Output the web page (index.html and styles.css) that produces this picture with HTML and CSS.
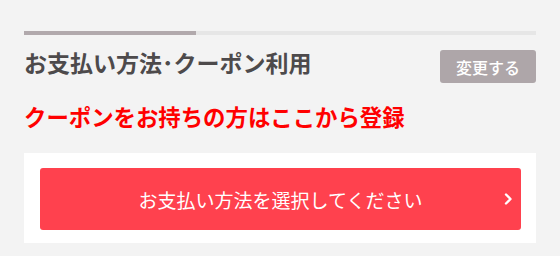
FILE: index.html
```html
<!DOCTYPE html>
<html lang="ja">
<head>
  <meta charset="UTF-8" />
  <meta name="viewport" content="width=device-width, initial-scale=1.0"/>
  <title>お支払い方法・クーポン利用</title>
  <link rel="stylesheet" href="styles.css">
</head>
<body>
  <div class="section">
    <div class="progress">
      <div class="progress-fill"></div>
    </div>

    <div class="section-head">
      <h2>お支払い方法･クーポン利用</h2>
      <button class="change-btn" type="button">変更する</button>
    </div>

    <a class="coupon-link" href="#">クーポンをお持ちの方はここから登録</a>

    <div class="panel">
      <button class="pay-btn" type="button">
        <span>お支払い方法を選択してください</span>
        <svg class="chevron" width="9" height="12" viewBox="0 0 9 12">
          <path d="M2 1.5 L6.5 6 L2 10.5" fill="none" stroke="#fff" stroke-width="2.4" stroke-linecap="round" stroke-linejoin="round"/>
        </svg>
      </button>
    </div>
  </div>
</body>
</html>
```

FILE: styles.css
```css
body {
  margin: 0;
  padding: 0;
  background: #f3f3f3;
  font-family: "Noto Sans CJK JP", "Noto Sans", sans-serif;
}

.section {
  padding: 31px 24px 0;
}

.progress {
  height: 4px;
  background: #e6e6e6;
}

.progress-fill {
  width: 172px;
  height: 100%;
  background: #b1a9ac;
}

.section-head {
  display: flex;
  justify-content: space-between;
  align-items: flex-start;
  margin-top: 15px;
}

h2 {
  margin: 0;
  font-size: 23px;
  line-height: 24px;
  font-weight: 700;
  color: #4d4a4b;
}

.change-btn {
  width: 96px;
  height: 33px;
  padding: 0;
  border: none;
  border-radius: 3px;
  background: #aea6a9;
  color: #fff;
  font-family: inherit;
  font-size: 16px;
  font-weight: 500;
  cursor: pointer;
}

.coupon-link {
  display: block;
  margin-top: 18px;
  font-size: 22.4px;
  line-height: 30px;
  font-weight: 700;
  color: #ff0000;
  text-decoration: none;
}

.panel {
  margin-top: 22px;
  background: #fff;
  padding: 15px 15px 13px 16px;
}

.pay-btn {
  position: relative;
  display: flex;
  justify-content: center;
  align-items: center;
  width: 100%;
  height: 62px;
  border: none;
  border-radius: 3px;
  background: #ff414e;
  color: #fff;
  font-family: inherit;
  font-size: 19px;
  cursor: pointer;
}

.chevron {
  position: absolute;
  right: 8px;
  top: 25px;
}
```
